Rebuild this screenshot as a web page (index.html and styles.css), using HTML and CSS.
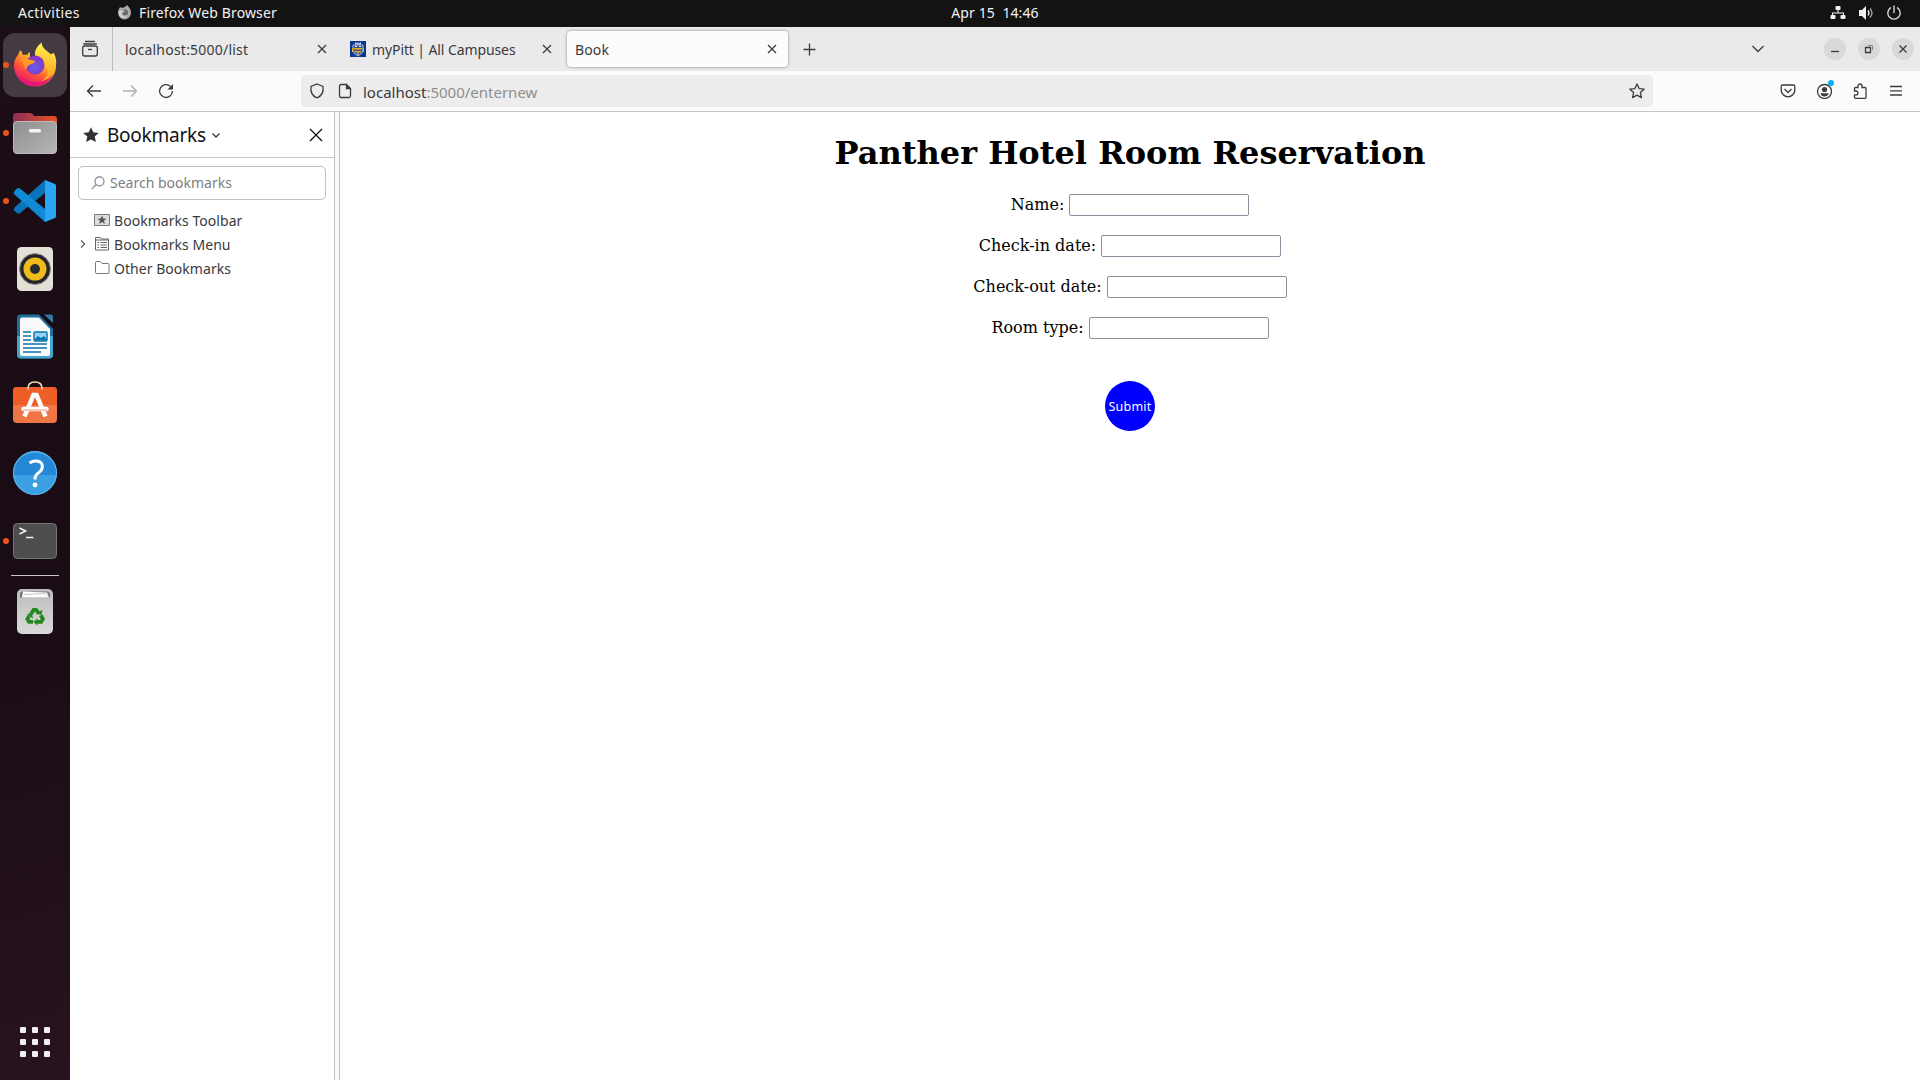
FILE: index.html
```html
<!DOCTYPE html>
<html lang="en">
<head>
<meta charset="utf-8">
<title>Book</title>
<link rel="stylesheet" href="styles.css">
</head>
<body>
<header class="topbar">
  <span class="t activities">Activities</span>
  <svg class="app-icon" width="16" height="16" viewBox="0 0 16 16"><path d="M2 4l1-2 2 1 3-1 2-2c2 2 4 4 4 8a6.500 6.500 0 0 1-13 0c0-2 .5-3 1-4z" fill="#aaa"/><circle cx="8" cy="7.500" r="3" fill="#666"/><path d="M2 6c2-1 4 0 6 0-1 2-3 1-3 3s3 3 5 1c-1 4-7 4-8-1z" fill="#ccc"/></svg>
  <span class="t appname">Firefox Web Browser</span>
  <span class="clock"><span class="t clock-text">Apr 15&nbsp; 14:46</span></span>
  <div class="tray">
    <svg width="16" height="16" viewBox="0 0 16 16" fill="#f2f2f2"><rect x="5.500" y="1" width="5" height="4" rx="1"/><rect x=".5" y="10" width="5" height="4" rx="1"/><rect x="10.500" y="10" width="5" height="4" rx="1"/><path d="M7.500 5h1v2.500H14V10h-1V8.500H3V10H2V7.500h5.500z"/></svg>
    <svg width="16" height="16" viewBox="0 0 16 16"><path d="M1 5h3l4-4v14l-4-4H1z" fill="#f2f2f2"/><path d="M10 5.500q2 2.500 0 5" fill="none" stroke="#f2f2f2" stroke-width="1.300"/><path d="M12 3.500q4 4.500 0 9" fill="none" stroke="#aaa" stroke-width="1.300"/></svg>
    <svg width="16" height="16" viewBox="0 0 16 16" fill="none" stroke="#d8d8d8" stroke-width="1.400" stroke-linecap="round"><path d="M8 1v6.500M4.500 2.800a6.200 6.200 0 1 0 7 0"/></svg>
  </div>
</header>
<div class="desktop">
<nav class="dock">
  <div class="app current running"><svg width="64" height="64" viewBox="0 0 64 64">
    <defs>
      <linearGradient id="ff1" x1=".8" y1=".1" x2=".25" y2=".95"><stop offset="0" stop-color="#ffe33d"/><stop offset=".35" stop-color="#ffa12a"/><stop offset=".65" stop-color="#ff5038"/><stop offset="1" stop-color="#e3127f"/></linearGradient>
      <radialGradient id="ff2" cx=".5" cy=".6" r=".6"><stop offset="0" stop-color="#6560e8"/><stop offset="1" stop-color="#8a2fc0"/></radialGradient>
      <linearGradient id="ff3" x1="0" y1="0" x2="0" y2="1"><stop offset="0" stop-color="#fff04a"/><stop offset="1" stop-color="#ff9d22"/></linearGradient>
    </defs>
    <path d="M18 17l2 5q2-1 4 0 2-3 3-3v5l12 0 12-4q3 7 2 13a21 20.500 0 0 1-42 0q0-7 4-11 1-4 3-5z" fill="url(#ff1)"/>
    <path d="M38.500 9.500c-8 7-8 13-4 17l9 9c4 4-1 11-6 13 10-1 16-9 15-18-.5-5-2-8-4-10l1 4c-3-7-10-7-11-15z" fill="url(#ff3)"/>
    <circle cx="32" cy="32" r="9.500" fill="url(#ff2)"/>
    <path d="M17 27c4-3 6-1 8-1l7 2c0 2-3 3-5 3.500-3 1-3 4-4 5-3-4-2-7-6-9.500z" fill="#ff9a24"/>
    <path d="M11.500 36q5 13 21 13 11 0 18-8-6 12-18 12T11.500 36z" fill="#e5137c" opacity=".8"/>
  </svg></div>
  <div class="app running"><svg width="64" height="64" viewBox="0 1 64 64">
    <defs><linearGradient id="fo1"><stop offset="0" stop-color="#8c2d5a"/><stop offset="1" stop-color="#e95420"/></linearGradient><linearGradient id="fo2" x1="0" y1="0" x2="1" y2="1"><stop offset="0" stop-color="#8f8f8f"/><stop offset="1" stop-color="#b5b5b5"/></linearGradient></defs>
    <path d="M10 22v-6q0-3 3-3h14q2 0 3 1.500l1 1.500h20q3 0 3 3v5H10z" fill="url(#fo1)"/>
    <rect x="10.500" y="21.500" width="43" height="32" rx="3.500" fill="url(#fo2)" stroke="#bbb"/>
    <rect x="26" y="29" width="12" height="3.500" rx="1.500" fill="#f5f5f5"/>
  </svg></div>
  <div class="app running"><svg width="64" height="64" viewBox="0 0 64 64">
    <path d="M11.500 38.500q-1.500 2 0 3.500l2.500 2q1.500 1 3 0L42 24V11z" fill="#0873b8"/>
    <path d="M11.500 25.500q-1.500-2 0-3.500l2.500-2.500q1.500-1 3 0L42 40v13z" fill="#1089d6"/>
    <path d="M42 11l10 4q1 .5 1 2v30q0 1.500-1 2l-10 4z" fill="#28a5f3"/>
  </svg></div>
  <div class="app"><svg width="64" height="64" viewBox="0 0 64 64">
    <rect x="14" y="10" width="36" height="44" rx="4.500" fill="#e4e0d5"/><circle cx="32" cy="32" r="15.500" fill="#24242e" stroke="#99948c"/><circle cx="32" cy="32" r="11.500" fill="#f0bb1c"/><circle cx="32" cy="32" r="5" fill="#262b30"/>
  </svg></div>
  <div class="app"><svg width="64" height="64" viewBox="0 0 64 64">
    <path d="M18 9.500h18L50 24v25.500q0 4-4 4H18q-4 0-4-4v-36q0-4 4-4z" fill="#1d6f9e"/><path d="M14 31h36v18.500q0 4-4 4H18q-4 0-4-4z" fill="#41a5d0"/><path d="M41 9.500h7q2 0 2 2V18z" fill="#2e7ca8"/>
    <path d="M19 12.500h17l11 11.500v25q0 2-2 2H19q-2 0-2-2V14.500q0-2 2-2z" fill="#fafafa"/>
    <path d="M20 27h8M20 31h8M20 35h8M20 39h24M20 43h24M20 47h18" stroke="#0871ad" stroke-width="1.700"/>
    <rect x="31" y="27" width="13" height="9" rx="1" fill="#9bd0ee" stroke="#0871ad" stroke-width="1.400"/><path d="M31 35l4-4 3 2 3-2 3 4z" fill="#0871ad"/>
  </svg></div>
  <div class="app"><svg width="64" height="64" viewBox="0 4 64 64">
    <rect x="10" y="18" width="44" height="36" rx="4" fill="#ef7547"/><path d="M10 36V22q0-4 4-4h36q4 0 4 4v14z" fill="#ee5f27"/>
    <path d="M25 20.500v-1q0-6.500 7-6.500t7 6.500v1" fill="none" stroke="#f5ddb0" stroke-width="1.700"/>
    <path d="M21.500 47.500L30.500 26h3l9 21.500" fill="none" stroke="#fff" stroke-width="4.500"/><path d="M20.500 40h23" stroke="#fff" stroke-width="4.500" stroke-linecap="round"/><path d="M20 41h24" stroke="#ef7547" stroke-width=".8"/>
  </svg></div>
  <div class="app"><svg width="64" height="64" viewBox="0 0 64 64">
    <circle cx="32" cy="32" r="22" fill="#3ba0e3"/><path d="M10 34a22 22 0 1 1 44 0z" fill="#2587d7"/><circle cx="32" cy="32" r="21.500" fill="none" stroke="#66b5ed"/>
    <path d="M26.500 22q3-2 6-2c8 0 8.500 7 4 11-3 2.500-4.500 3.500-4.500 7.500" fill="none" stroke="#fff" stroke-width="3"/><circle cx="32" cy="44" r="2.400" fill="#fff"/>
  </svg></div>
  <div class="app running"><svg width="64" height="64" viewBox="0 0 64 64">
    <rect x="10.500" y="14.500" width="43" height="35" rx="4" fill="#4d4d4d" stroke="#777"/><path d="M16.500 19l6 3-6 3M23 28.500h7.500" fill="none" stroke="#eee" stroke-width="1.700"/>
  </svg></div>
  <div class="separator"></div>
  <div class="app"><svg width="64" height="64" viewBox="0 -.5 64 64">
    <defs><linearGradient id="tr" x2="0" y2="1"><stop offset="0" stop-color="#bcbcbc"/><stop offset="1" stop-color="#dadada"/></linearGradient></defs>
    <rect x="14" y="9.500" width="36" height="45" rx="5" fill="url(#tr)"/><path d="M17 18v-3q0-3 3-3h24q3 0 3 3v3z" fill="#777"/><path d="M19 18l1-6 24 1 2 5z" fill="#fff"/><path d="M21 15l21-1 3 3" fill="none" stroke="#aaa" stroke-width=".7"/>
    <g transform="translate(5 5.500) scale(.84)"><g fill="none" stroke="#23891f" stroke-width="4.500"><path d="M27 35l3.500-5.500h3l3 4"/><path d="M39 36l2.500 4.500-2 3.500H34"/><path d="M30 44h-5l-2-3.500 2-3.500"/></g><path d="M33 34.500l7 1 1-6zM35 39.500v9l-4.500-4.500zM22 35l6-1 2 6z" fill="#23891f"/></g>
  </svg></div>
  <div class="app show-apps"><svg width="64" height="64" viewBox="0 0 64 64" fill="#f0eeee"><rect x="17" y="17" width="6" height="6" rx="1"/><rect x="29" y="17" width="6" height="6" rx="1"/><rect x="41" y="17" width="6" height="6" rx="1"/><rect x="17" y="29" width="6" height="6" rx="1"/><rect x="29" y="29" width="6" height="6" rx="1"/><rect x="41" y="29" width="6" height="6" rx="1"/><rect x="17" y="41" width="6" height="6" rx="1"/><rect x="29" y="41" width="6" height="6" rx="1"/><rect x="41" y="41" width="6" height="6" rx="1"/></svg></div>
</nav>
<div class="browser">
  <div class="tabbar">
    <div class="view-button"><svg class="ico" width="18" height="18" viewBox="0 0 18 18"><path d="M4 1.500h10M2.500 4.500q0-.5.5-.5h12q.5 0 .5.500" /><rect x="1.700" y="6" width="14.600" height="10" rx="2"/><path d="M7 9.500h4"/></svg></div>
    <div class="tab"><span class="t tab1">localhost:5000/list</span><svg class="ico x" width="10" height="10" viewBox="0 0 10 10"><path d="M1 1l8 8M9 1L1 9"/></svg></div>
    <div class="tab"><svg class="favicon" width="16" height="16" viewBox="0 0 16 16"><path fill="#0a3694" d="M0 0h16v16H0z"/><path d="M3 4h10v5q0 4-5 6-5-2-5-6z" fill="#354f80" stroke="#b9c6dd" stroke-width=".9"/><path d="M4 7h8v1.500H4zM5 10h6v1.500H5z" fill="#e9af2b"/><path d="M5 3.500V1.500h1.500v1h1v-1h1v1h1v-1H11v2zM5 5h2v1H5zM9 5h2v1H9zM7.500 12h1v2h-1z" fill="#dbe4f2"/><path d="M2 7h1v4H2zM13 7h1v4h-1z" fill="#e9af2b"/></svg><span class="t tab2">myPitt | All Campuses</span><svg class="ico x" width="10" height="10" viewBox="0 0 10 10"><path d="M1 1l8 8M9 1L1 9"/></svg></div>
    <div class="tab active"><span class="t tab3">Book</span><svg class="ico x" width="10" height="10" viewBox="0 0 10 10"><path d="M1 1l8 8M9 1L1 9"/></svg></div>
    <svg class="ico plus" width="14" height="14" viewBox="0 0 14 14"><path d="M7.500 1.500v12M1.500 7.500h12"/></svg>
    <svg class="ico tabs-menu" width="14" height="14" viewBox="0 0 14 14"><path d="M1.500 4L7 9.500 12.500 4"/></svg>
    <div class="window-buttons">
      <span class="wb"><svg class="ico" width="10" height="10" viewBox="0 0 10 10"><path d="M1 7.500h8"/></svg></span>
      <span class="wb"><svg class="ico" width="10" height="10" viewBox="0 0 10 10"><path d="M1.500 3.500h5v5h-5z"/><path d="M4 1.500h4.500V6" stroke="#888" stroke-width="1"/></svg></span>
      <span class="wb"><svg class="ico" width="10" height="10" viewBox="0 0 10 10"><path d="M1.500 1.500l7 7M8.500 1.500l-7 7"/></svg></span>
    </div>
  </div>
  <div class="navbar">
    <div class="nav-buttons">
      <svg class="ico" width="16" height="16" viewBox="0 0 16 16"><path d="M15 8H1.500M7 2.500L1.500 8 7 13.500"/></svg>
      <svg class="ico dim" width="16" height="16" viewBox="0 0 16 16"><path d="M1 8h13.500M9 2.500L14.500 8 9 13.500"/></svg>
      <svg class="ico" width="16" height="16" viewBox="0 0 16 16"><path d="M12.500 3.500A6.400 6.400 0 1 0 14.400 8"/><path d="M15 1v5.500H9.500z" fill="#3c3c3e" stroke="none"/></svg>
    </div>
    <div class="urlbar">
      <svg class="ico shield" width="16" height="16" viewBox="0 0 16 16"><path d="M8 1l6 2.500c.6 4-.5 9-6 11.500C2.500 12.500 1.400 7.500 2 3.500z"/></svg>
      <svg class="ico page" width="16" height="16" viewBox="0 0 16 16"><path d="M4 1.500h5.500L13.500 5.500v7.500q0 1.500-1.500 1.500H4Q2.500 14.500 2.500 13V3q0-1.500 1.500-1.500z"/><path d="M9.500 2v3.500h3.500z" fill="#3c3c3e"/></svg>
      <span class="t url">localhost<span class="path">:5000/enternew</span></span>
      <svg class="ico bm" width="16" height="16" viewBox="0 0 16 16"><path d="M8 1l2.100 4.600 5 .6-3.700 3.400 1 5L8 12.100l-4.400 2.500 1-5L.9 6.200l5-.6z" stroke-linejoin="round"/></svg>
    </div>
    <div class="tools">
      <svg class="ico" width="16" height="16" viewBox="0 0 16 16"><path d="M2.500 2h11q1.300 0 1.300 1.300V7a6.800 6.800 0 0 1-13.600 0V3.300Q1.200 2 2.500 2z"/><path d="M4.500 6L8 9.500 11.500 6"/></svg>
      <span class="account"><svg class="ico" width="16" height="16" viewBox="0 0 16 16"><circle cx="8.500" cy="8.500" r="7"/><circle cx="8.500" cy="6.500" r="2.600" fill="#3c3c3e" stroke="none"/><path d="M4.300 10.300h8.400q-1 3.200-4.200 3.200t-4.200-3.200z" fill="#3c3c3e" stroke="none"/></svg><i class="badge"></i></span>
      <svg class="ico" width="16" height="16" viewBox="-1 0 16 16"><path d="M1.500 5.500q0-1 1-1h2.500V3a2 2 0 0 1 4 0v1.500h3q1 0 1 1v9q0 .8-1 .8H2.500q-1 0-1-.8v-2.700H3a1.900 1.900 0 0 0 0-3.800H1.500z"/></svg>
      <svg class="ico" width="16" height="16" viewBox="0 0 16 16"><path d="M2 3.500h12M2 7.800h12M2 12h12"/></svg>
    </div>
  </div>
  <div class="main">
    <aside class="sidebar">
      <div class="side-head"><svg width="16" height="16" viewBox="0 0 16 16"><path d="M8 .3l2.300 5 5.500.6-4.100 3.700 1.200 5.500L8 12.400l-4.900 2.700 1.200-5.500L.2 5.900l5.500-.6z" fill="#333"/></svg><span class="t side-title">Bookmarks</span><svg class="ico chev" width="8" height="8" viewBox="0 0 8 8"><path d="M.5 2.500L4 6 7.500 2.500"/></svg><svg class="ico side-close" width="14" height="14" viewBox="0 0 14 14"><path d="M1 1l12 12M13 1L1 13" stroke="#111"/></svg></div>
      <div class="search"><svg width="14" height="14" viewBox="0 0 14 14" fill="none" stroke="#888" stroke-width="1.200"><circle cx="8.500" cy="5.300" r="4.500"/><path d="M5.300 8.500L.7 13.200"/></svg><span class="t ph">Search bookmarks</span></div>
      <div class="tree">
        <div class="row"><span class="tw"></span><svg width="16" height="16" viewBox="0 0 16 16"><path d="M.5 2.500h15v11H.5z" fill="#ddd" stroke="#777"/><path d="M8 3.500l1.300 3 3.200.2-2.500 2 .9 3.200L8 10.100l-2.900 1.800.9-3.200-2.500-2 3.200-.2z" fill="#555"/></svg><span class="t r1">Bookmarks Toolbar</span></div>
        <div class="row"><span class="tw"><svg width="6" height="10" viewBox="0 0 6 10"><path d="M1 1.500L4.700 5 1 8.500" fill="none" stroke="#555" stroke-width="1.200"/></svg></span><svg width="16" height="16" viewBox="0 0 16 16" fill="none" stroke="#666"><path d="M1.500 2V1.500h5l1 1.500h7v11h-13zM1.500 4h13M3.500 6.500H5M6.500 6.500H13M3.500 9H5M6.500 9H13M3.500 11.500H5M6.500 11.500H13"/></svg><span class="t r2">Bookmarks Menu</span></div>
        <div class="row"><span class="tw"></span><svg width="16" height="16" viewBox="0 0 16 16" fill="none" stroke="#777"><path d="M1.500 12.500v-10q0-1 1-1h3.300q.7 0 1.200.7l1 1.300h6q1 0 1 1v8q0 1-1 1h-11.500q-1 0-1-1z"/></svg><span class="t r3">Other Bookmarks</span></div>
      </div>
    </aside>
    <div class="splitter"></div>
    <section class="page-content">
      <h1 class="title">Panther Hotel Room Reservation</h1>
      <form class="form">
        <label class="field"><span class="t">Name:</span><input class="input" type="text"></label>
        <label class="field"><span class="t">Check-in date:</span><input class="input" type="text"></label>
        <label class="field"><span class="t">Check-out date:</span><input class="input" type="text"></label>
        <label class="field"><span class="t">Room type:</span><input class="input" type="text"></label>
        <button class="submit" type="button">Submit</button>
      </form>
    </section>
  </div>
</div>
</div>
</body>
</html>
```
FILE: styles.css
```css
* { box-sizing: border-box; }
body { margin: 0; width: 1920px; height: 1080px; overflow: hidden; display: flex; flex-direction: column; font: 14px/20px "Noto Sans", sans-serif; color: #3a3a3c; background: #fff; }
svg { display: block; flex: none; }
.t { white-space: nowrap; }
.ico { fill: none; stroke: #3c3c3e; stroke-width: 1.3; }
.dim { opacity: .4; }

.topbar { display: grid; grid-template-columns: 117px 22px 736px 240px 1fr; height: 27px; background: #131313; color: #f2f2f2; align-items: center; padding-bottom: 1px; }
.activities { padding-left: 18px; letter-spacing: .35px; }
.appname { letter-spacing: .13px; }
.clock { text-align: center; }
.clock-text { letter-spacing: .1px; }
.tray { display: flex; justify-content: flex-end; gap: 12px; padding-right: 18px; }

.desktop { flex: 1; display: flex; min-height: 0; }
.dock { width: 70px; display: flex; flex-direction: column; gap: 4px; padding: 6px 3px; background: linear-gradient(165deg, #1c0d16 0%, #190c14 55%, #27131f 100%); }
.app { position: relative; width: 64px; height: 64px; border-radius: 12px; flex: none; }
.current { background: #443a41; }
.running::before { content: ""; position: absolute; left: 0; top: 29px; width: 6px; height: 6px; border-radius: 50%; background: #e95420; }
.separator { height: 1px; margin: -2px 8px -1px; background: #c9c6c8; flex: none; }
.show-apps { margin-top: auto; }

.browser { flex: 1; display: flex; flex-direction: column; min-width: 0; }
.tabbar { height: 44px; display: flex; align-items: center; background: #eaeaea; }
.view-button { width: 43px; height: 44px; padding: 13px 0 0 11px; border-right: 1px solid #bdbdbd; }
.tab { display: flex; align-items: center; height: 36px; width: 221px; padding: 0 11px 0 8px; margin-left: 4px; border-radius: 4px; }
.tab .t { padding-top: 1px; }
.tab1 { letter-spacing: .22px; }
.tab2 { letter-spacing: -.1px; }
.tab3 { letter-spacing: .15px; }
.tab .x { margin-left: auto; }
.favicon { margin-right: 6px; }
.active { background: #fcfcfc; box-shadow: 0 0 3px rgba(0,0,0,.45); }
.plus { margin-left: 14px; }
.tabs-menu { margin-left: auto; margin-right: 59px; }
.window-buttons { display: flex; gap: 12px; padding-right: 6px; }
.wb { width: 22px; height: 22px; border-radius: 50%; background: #d9d9d9; display: grid; place-items: center; }

.navbar { height: 41px; display: flex; align-items: center; background: #fbfbfb; border-bottom: 1px solid #c6c6c6; padding-left: 16px; }
.nav-buttons { display: flex; gap: 20px; width: 215px; }
.urlbar { width: 1352px; height: 32px; border-radius: 4px; background: #ededed; display: flex; align-items: center; padding: 0 8px; }
.url { font-size: 15px; padding-top: 1px; }
.page { margin: 0 10px 0 12px; }
.path { color: #8f8f90; }
.bm { margin-left: auto; }
.tools { margin-left: auto; display: flex; gap: 20px; padding-right: 16px; }
.account { position: relative; }
.badge { position: absolute; left: 12px; top: -3px; width: 6px; height: 6px; border-radius: 50%; background: #0ab0f5; }

.main { flex: 1; display: flex; min-height: 0; }
.sidebar { width: 264px; background: #fff; }
.side-head { height: 46px; border-bottom: 1px solid #c6c6c6; display: flex; align-items: center; padding: 0 11px 0 13px; }
.side-title { font-size: 19px; letter-spacing: -.25px; color: #111; margin: 0 6px 0 8px; }
.side-close { margin-left: auto; }
.search { margin: 8px 8px 0; height: 34px; border: 1px solid #c0c0c0; border-radius: 5px; display: flex; align-items: center; padding-left: 12px; gap: 5px; color: #808080; }
.tree { padding-top: 8px; }
.row { height: 24px; display: flex; align-items: center; }
.row .t { margin-left: 4px; padding-top: 2px; letter-spacing: .04px; }
.tw { width: 24px; padding-left: 10px; }
.splitter { width: 6px; border: 1px solid #bfbfbf; border-width: 0 1px; background: #f9f9f9; }

.page-content { flex: 1; padding: 22px 0 0; font-family: "DejaVu Serif", serif; font-size: 16px; color: #000; }
.title { margin: 0; text-align: center; font-size: 32px; line-height: 38px; }
.form { display: flex; flex-direction: column; align-items: center; padding-top: 22px; gap: 19px; }
.field { display: flex; align-items: center; height: 22px; gap: 5px; }
.input { width: 180px; height: 22px; border: 1px solid #8f8f9d; border-radius: 2px; background: #fff; padding: 0; }
.submit { margin-top: 23px; width: 50px; height: 50px; border: 0; border-radius: 50%; background: #00f; color: #fff; padding: 0; font: 12.5px "Noto Sans", sans-serif; letter-spacing: .2px; }
```
